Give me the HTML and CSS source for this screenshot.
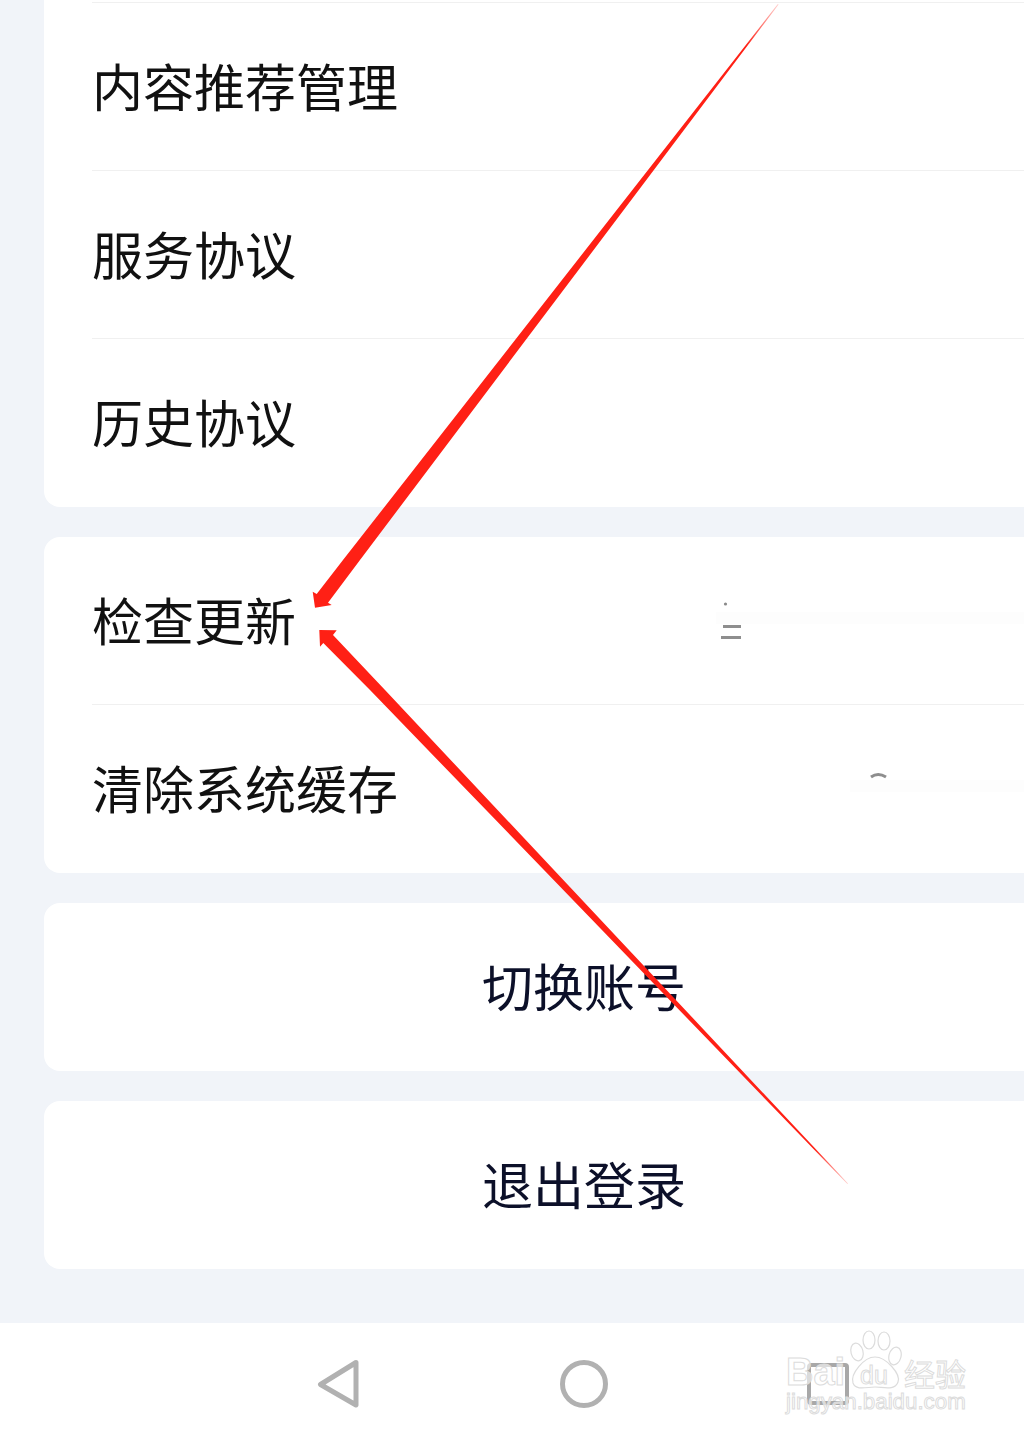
FILE: index.html
```html
<!DOCTYPE html>
<html lang="zh-CN">
<head>
    <meta charset="UTF-8">
    <meta name="viewport" content="width=device-width, initial-scale=1.0">
    <title>设置</title>
    <link rel="stylesheet" href="styles.css">
</head>
<body>
    <div class="page">
        <div class="content">
            <div class="card card--cut">
                <div class="row">内容推荐管理</div>
                <div class="row">服务协议</div>
                <div class="row">历史协议</div>
            </div>
            <div class="card card--short">
                <div class="row">检查更新</div>
                <div class="row">清除系统缓存</div>
            </div>
            <div class="card card--action">切换账号</div>
            <div class="card card--action">退出登录</div>
        </div>

        <div class="navbar">
            <svg class="navbar__icon" viewBox="0 0 48 48">
                <path d="M42 2.5 L6.5 24.5 L42 45 Z" fill="none" stroke="#b1b1b1" stroke-width="5" stroke-linejoin="round"/>
            </svg>
            <svg class="navbar__icon" viewBox="0 0 48 48">
                <circle cx="24" cy="24" r="21.5" fill="none" stroke="#b1b1b1" stroke-width="5"/>
            </svg>
            <svg class="navbar__icon" viewBox="0 0 48 48">
                <rect x="3" y="5" width="38" height="38" rx="2" fill="none" stroke="#a8a8a8" stroke-width="4"/>
            </svg>
        </div>

        <!-- leftovers of the erased values -->
        <div class="smear smear--one"></div>
        <div class="smear smear--two"></div>

        <!-- annotations drawn on top of the screenshot -->
        <svg class="overlay" viewBox="0 0 1024 1440">
            <defs>
                <linearGradient id="fadeUp" gradientUnits="userSpaceOnUse" x1="745" y1="45" x2="778" y2="4">
                    <stop offset="0" stop-color="#ff2015"/>
                    <stop offset="1" stop-color="#ff2015" stop-opacity="0.2"/>
                </linearGradient>
                <linearGradient id="fadeDown" gradientUnits="userSpaceOnUse" x1="815" y1="1148" x2="848" y2="1184">
                    <stop offset="0" stop-color="#ff2015"/>
                    <stop offset="1" stop-color="#ff2015" stop-opacity="0.2"/>
                </linearGradient>
            </defs>
            <path d="M778.6 4.5 L360 560 L328 602.7 L331.7 605 L315 607.7 L312.7 591.7 L316.7 594 L343 560 L777.8 4 Z" fill="url(#fadeUp)"/>
            <path d="M848 1183.4 L385 690 L333 635 L336.7 630.3 L319.3 630 L320 646.7 L323.3 643 L370 690 L847.4 1184 Z" fill="url(#fadeDown)"/>
            <circle cx="725.5" cy="604" r="1.6" fill="#8a8a8a"/>
            <rect x="723" y="625" width="18" height="3" fill="#8e8e8e"/>
            <rect x="721" y="636" width="20" height="3" fill="#8e8e8e"/>
            <path d="M871 777 Q878 772 886 777" fill="none" stroke="#8e8e8e" stroke-width="3"/>
        </svg>

        <div class="watermark">
            <div class="watermark__logo">
                <span>Bai</span>
                <svg class="watermark__paw" viewBox="0 0 54 60">
                    <ellipse cx="9" cy="22" rx="6" ry="9" transform="rotate(-15 9 22)" fill="none" stroke="#dcdcdc" stroke-width="1.2"/>
                    <ellipse cx="21" cy="10" rx="6" ry="9" fill="none" stroke="#dcdcdc" stroke-width="1.2"/>
                    <ellipse cx="36" cy="11" rx="6" ry="9" fill="none" stroke="#dcdcdc" stroke-width="1.2"/>
                    <ellipse cx="47" cy="26" rx="6" ry="9" transform="rotate(15 47 26)" fill="none" stroke="#dcdcdc" stroke-width="1.2"/>
                    <path d="M27 27 C38 27 53 44 50 52 C47 61 35 57 27 57 C19 57 8 61 5 53 C2 44 16 27 27 27 Z" fill="none" stroke="#dcdcdc" stroke-width="1.2"/>
                </svg>
                <span class="watermark__du">du</span>
                <span class="watermark__cn">经验</span>
            </div>
            <div class="watermark__url">jingyan.baidu.com</div>
        </div>
    </div>
</body>
</html>
```

FILE: styles.css
```css
* {
    margin: 0;
    padding: 0;
    box-sizing: border-box;
}

body {
    background-color: #f1f4f9;
    font-family: "Noto Sans CJK SC", "Noto Sans", sans-serif;
}

.page {
    position: relative;
    width: 1024px;
    height: 1440px;
    overflow: hidden;
    display: flex;
    flex-direction: column;
}

.content {
    flex: 1;
    display: flex;
    flex-direction: column;
    gap: 30px;
    padding-left: 44px;
}

.card {
    width: 1080px;
    background-color: #ffffff;
    border-radius: 16px;
    padding-left: 48px;
    padding-bottom: 1px;
}

.card--cut {
    border-radius: 0 0 0 16px;
    padding-top: 2px;
}

.card--cut .row:first-child {
    border-top: 1px solid #f0f0f0;
}

.card--short .row:first-child {
    height: 167px;
}

.row {
    height: 168px;
    display: flex;
    align-items: center;
    padding-bottom: 4px;
    font-size: 51px;
    color: #111111;
}

.row + .row {
    border-top: 1px solid #f0f0f0;
}

.card--action {
    height: 168px;
    padding: 0 0 5px 0;
    display: flex;
    align-items: center;
    justify-content: center;
    font-size: 51px;
    color: #0c1029;
}

.navbar {
    height: 117px;
    background-color: #ffffff;
    display: flex;
    gap: 198px;
    padding: 37px 0 0 314px;
}

.navbar__icon {
    width: 48px;
    height: 48px;
}

.smear {
    position: absolute;
    background-color: #fdfdfd;
}

.smear--one {
    left: 716px;
    top: 612px;
    width: 308px;
    height: 12px;
}

.smear--two {
    left: 850px;
    top: 780px;
    width: 174px;
    height: 12px;
}

.overlay {
    position: absolute;
    left: 0;
    top: 0;
    width: 1024px;
    height: 1440px;
}

.watermark {
    position: absolute;
    left: 786px;
    top: 1330px;
    width: 184px;
    font-family: "Liberation Sans", sans-serif;
    color: rgba(255, 255, 255, 0.6);
    -webkit-text-stroke: 1px #dcdcdc;
}

.watermark__logo {
    position: relative;
    height: 62px;
    padding-bottom: 1px;
    display: flex;
    align-items: flex-end;
    font-size: 38px;
    font-weight: bold;
    line-height: 38px;
}

.watermark__paw {
    position: absolute;
    left: 62px;
    top: 0;
    width: 54px;
    height: 60px;
}

.watermark__du {
    position: absolute;
    left: 74px;
    bottom: 3px;
    font-size: 25px;
    font-weight: normal;
    line-height: 28px;
}

.watermark__cn {
    position: absolute;
    left: 118px;
    bottom: 1px;
    font-family: "Noto Sans CJK SC", sans-serif;
    font-size: 31px;
    font-weight: normal;
    line-height: 36px;
}

.watermark__url {
    font-size: 22.3px;
    line-height: 20px;
    white-space: nowrap;
}
```
